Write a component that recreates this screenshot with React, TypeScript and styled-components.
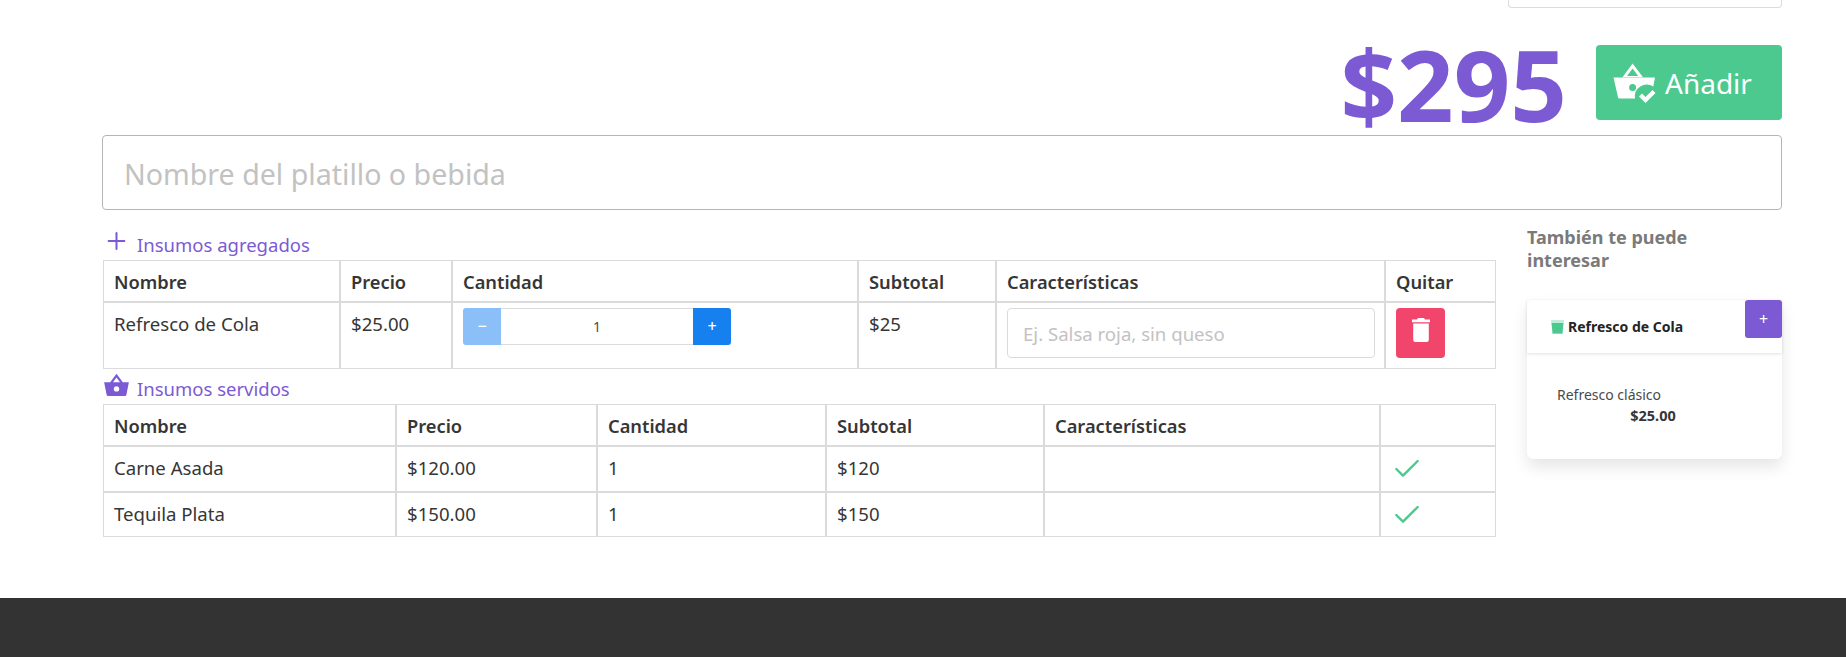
import styled, { createGlobalStyle } from "styled-components"
import { Check, Plus } from "lucide-react"

const purple = "#7c5ad4"
const green = "#4bc98f"
const line = "#dbdbdb"

const GlobalStyle = createGlobalStyle`
	html, body {
		margin: 0;
		padding: 0;
		background: #fff;
	}
	body {
		font-family: "Noto Sans", "Open Sans", sans-serif;
		color: #363636;
	}
`

const Page = styled.div`
	display: flex;
	flex-direction: column;
	height: 657px;
	overflow: hidden;
`

const Main = styled.main`
	flex: 1;
	padding: 0 64px 0 102px;
`

const TopBox = styled.div`
	box-sizing: border-box;
	height: 8px;
	width: 274px;
	margin-left: auto;
	border: 1px solid ${line};
	border-top: none;
	border-radius: 0 0 4px 4px;
`

const TotalRow = styled.div`
	display: flex;
	justify-content: flex-end;
	align-items: flex-start;
	height: 127px;
	gap: 29px;
`

const Total = styled.div`
	font-size: 99px;
	font-weight: 700;
	line-height: 100px;
	margin-top: 26px;
	color: ${purple};
`

const AddButton = styled.button`
	display: flex;
	align-items: center;
	gap: 5px;
	width: 186px;
	height: 75px;
	margin-top: 37px;
	padding: 0 0 0 14px;
	border: none;
	border-radius: 4px;
	background: ${green};
	color: #fff;
	font: inherit;
	font-size: 28px;
`

const DishInput = styled.input`
	box-sizing: border-box;
	display: block;
	width: 100%;
	height: 75px;
	padding: 2px 21px 0;
	border: 1px solid #b5b5b5;
	border-radius: 4px;
	font: inherit;
	font-size: 28.6px;
	outline: none;
	&::placeholder {
		color: #c2c2c2;
	}
`

const Columns = styled.div`
	display: flex;
	justify-content: space-between;
`

const Tables = styled.div`
	width: 1393px;
	margin-left: 1px;
`

const SectionTitle = styled.div<{ $top: number }>`
	display: flex;
	align-items: flex-end;
	height: 33px;
	padding: ${(p) => p.$top}px 0 2px;
	font-size: 18.5px;
	line-height: 26px;
	color: ${purple};
`

const TitleIcon = styled.span`
	display: flex;
	justify-content: center;
	width: 27px;
	margin: 0 7px 1px 0;
`

const Table = styled.table`
	width: 1393px;
	table-layout: fixed;
	border-collapse: separate;
	border-spacing: 0;
	font-size: 18.6px;
`

const Th = styled.th`
	box-sizing: border-box;
	height: 42px;
	padding: 0 10px;
	border: 1px solid ${line};
	text-align: left;
	font-weight: 600;
	font-size: 18.3px;
	color: #363636;
`

const Td = styled.td<{ $height: number }>`
	box-sizing: border-box;
	height: ${(p) => p.$height}px;
	padding: 7px 10px;
	border: 1px solid ${line};
	vertical-align: top;
	line-height: 27px;
`

const ActionTd = styled(Td)`
	padding: 5px 10px 0;
`

const CheckTd = styled(Td)`
	padding: 6px 10px 0;
`

const DoneIcon = styled(Check)`
	display: block;
	color: ${green};
`

const Stepper = styled.div`
	display: flex;
	width: 268px;
	height: 37px;
`

const StepButton = styled.button<{ $dim?: boolean; $side: "left" | "right" }>`
	width: 38px;
	padding: 0;
	border: none;
	border-radius: ${(p) => (p.$side === "left" ? "3px 0 0 3px" : "0 3px 3px 0")};
	background: ${(p) => (p.$dim ? "#8bbff8" : "#1681ee")};
	color: #fff;
	font: inherit;
	font-size: 16px;
	font-weight: 500;
`

const StepValue = styled.div`
	flex: 1;
	border: 1px solid ${line};
	border-width: 1px 0;
	text-align: center;
	font-size: 14px;
	line-height: 35px;
	color: #4a4a4a;
`

const NoteInput = styled.input`
	box-sizing: border-box;
	display: block;
	width: 368px;
	height: 50px;
	padding: 0 15px;
	border: 1px solid ${line};
	border-radius: 4px;
	font: inherit;
	font-size: 18.6px;
	outline: none;
	&::placeholder {
		color: #c2c2c2;
	}
`

const TrashButton = styled.button`
	display: flex;
	align-items: center;
	justify-content: center;
	width: 49px;
	height: 50px;
	padding: 0 0 6px;
	border: none;
	border-radius: 4px;
	background: #f1456b;
`

const Aside = styled.aside`
	width: 255px;
	padding-top: 16px;
`

const AsideTitle = styled.h3`
	max-width: 200px;
	margin: 0;
	font-size: 18px;
	font-weight: 700;
	line-height: 23px;
	color: #7a7a7a;
`

const Card = styled.div`
	position: relative;
	height: 159px;
	margin-top: 28px;
	border-radius: 6px;
	background: #fff;
	box-shadow: 0 8px 16px rgba(10, 10, 10, 0.1), 0 0 1px rgba(10, 10, 10, 0.04);
`

const CardHeader = styled.div`
	display: flex;
	align-items: center;
	gap: 4px;
	height: 53px;
	padding: 0 0 0 24px;
	box-sizing: border-box;
	box-shadow: 0 1px 3px rgba(10, 10, 10, 0.12);
	font-size: 14px;
	font-weight: 700;
	color: #242424;
`

const CardAdd = styled.button`
	position: absolute;
	top: 0;
	right: 0;
	width: 37px;
	height: 38px;
	padding: 0;
	border: none;
	border-radius: 3px;
	background: ${purple};
	color: #fff;
	font: inherit;
	font-size: 16px;
`

const CardBody = styled.div`
	padding: 31px 30px 0;
	font-size: 14px;
	line-height: 21px;
	color: #4a4a4a;
`

const CardPrice = styled.div`
	padding-right: 3px;
	text-align: center;
	font-size: 14.5px;
	font-weight: 700;
	color: #363636;
`

const Footer = styled.footer`
	height: 59px;
	background: #333;
`

const Basket = ({ size }: { size: number }) => (
	<svg width={size} height={size} viewBox="0 0 24 24" fill={purple}>
		<path d="M12 1.5 17.6 9H23l-2.2 11.2a1.4 1.4 0 0 1-1.4 1.1H4.6a1.4 1.4 0 0 1-1.4-1.1L1 9h5.4Zm0 3.4L8.9 9h6.2ZM12 12.6a2.4 2.4 0 1 0 0 4.8 2.4 2.4 0 0 0 0-4.8Z" fillRule="evenodd" />
	</svg>
)

const BasketCheck = () => (
	<svg width="50" height="50" viewBox="0 2.5 50 50" fill="#fff">
		<path
			fillRule="evenodd"
			d="M22.6 8 33 21.7H12.5ZM22.6 13 17 20.5h11.2Z"
		/>
		<path
			fillRule="evenodd"
			d="M3.5 22H45l-1.7 9A12 12 0 0 0 25 43H9.5a1.5 1.5 0 0 1-1.5-1.2ZM22.6 28.5a3.5 3.5 0 1 0 0 7 3.5 3.5 0 0 0 0-7Z"
		/>
		<path d="m29 41 3-3 3.5 3.5 7-7 3 3-10 10Z" />
	</svg>
)

const Trash = () => (
	<svg width="18" height="24" viewBox="0 0 18 24" fill="#fff">
		<path d="M6 0h6l1 1.6h5v2.6H0V1.6h5ZM1.2 5.4h15.6V22a2 2 0 0 1-2 2H3.2a2 2 0 0 1-2-2Z" />
	</svg>
)

const Cup = () => (
	<svg width="13" height="14" viewBox="0 0 13 14">
		<path d="M0 0h13l-1.4 14H1.4Z" fill="#bfeeda" />
		<path d="M.6 3h11.8l-1 10.6H1.6Z" fill={green} />
	</svg>
)

const addedColumns = [237, 112, 406, 138, 389, 111]
const servedColumns = [293, 201, 229, 218, 336, 116]

const served = [
	{ name: "Carne Asada", price: "$120.00", qty: 1, subtotal: "$120", height: 46 },
	{ name: "Tequila Plata", price: "$150.00", qty: 1, subtotal: "$150", height: 45 },
]

const App = () => {
	return (
		<Page>
			<GlobalStyle />
			<Main>
				<TopBox />
				<TotalRow>
					<Total>$295</Total>
					<AddButton>
						<BasketCheck />
						Añadir
					</AddButton>
				</TotalRow>
				<DishInput placeholder="Nombre del platillo o bebida" />
				<Columns>
					<Tables>
						<SectionTitle $top={15}>
							<TitleIcon>
								<Plus size={32} color={purple} strokeWidth={1.8} />
							</TitleIcon>
							Insumos agregados
						</SectionTitle>
						<Table>
							<colgroup>
								{addedColumns.map((w, i) => (
									<col key={i} width={w} />
								))}
							</colgroup>
							<thead>
								<tr>
									<Th>Nombre</Th>
									<Th>Precio</Th>
									<Th>Cantidad</Th>
									<Th>Subtotal</Th>
									<Th>Características</Th>
									<Th>Quitar</Th>
								</tr>
							</thead>
							<tbody>
								<tr>
									<Td $height={67}>Refresco de Cola</Td>
									<Td $height={67}>$25.00</Td>
									<ActionTd $height={67}>
										<Stepper>
											<StepButton $dim $side="left">−</StepButton>
											<StepValue>1</StepValue>
											<StepButton $side="right">+</StepButton>
										</Stepper>
									</ActionTd>
									<Td $height={67}>$25</Td>
									<ActionTd $height={67}>
										<NoteInput placeholder="Ej. Salsa roja, sin queso" />
									</ActionTd>
									<ActionTd $height={67}>
										<TrashButton>
											<Trash />
										</TrashButton>
									</ActionTd>
								</tr>
							</tbody>
						</Table>
						<SectionTitle $top={0}>
							<TitleIcon>
								<Basket size={31} />
							</TitleIcon>
							Insumos servidos
						</SectionTitle>
						<Table>
							<colgroup>
								{servedColumns.map((w, i) => (
									<col key={i} width={w} />
								))}
							</colgroup>
							<thead>
								<tr>
									<Th>Nombre</Th>
									<Th>Precio</Th>
									<Th>Cantidad</Th>
									<Th>Subtotal</Th>
									<Th>Características</Th>
									<Th />
								</tr>
							</thead>
							<tbody>
								{served.map((row) => (
									<tr key={row.name}>
										<Td $height={row.height}>{row.name}</Td>
										<Td $height={row.height}>{row.price}</Td>
										<Td $height={row.height}>{row.qty}</Td>
										<Td $height={row.height}>{row.subtotal}</Td>
										<Td $height={row.height} />
										<CheckTd $height={row.height}>
											<DoneIcon size={32} strokeWidth={1.8} />
										</CheckTd>
									</tr>
								))}
							</tbody>
						</Table>
					</Tables>
					<Aside>
						<AsideTitle>También te puede interesar</AsideTitle>
						<Card>
							<CardHeader>
								<Cup />
								Refresco de Cola
							</CardHeader>
							<CardAdd>+</CardAdd>
							<CardBody>
								Refresco clásico
								<CardPrice>$25.00</CardPrice>
							</CardBody>
						</Card>
					</Aside>
				</Columns>
			</Main>
			<Footer />
		</Page>
	)
}

export default App
